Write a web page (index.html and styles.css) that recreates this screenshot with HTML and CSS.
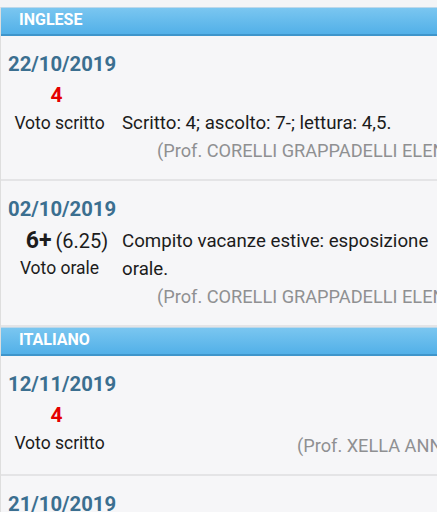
FILE: index.html
```html
<!DOCTYPE html>
<html lang="it">
<head>
<meta charset="utf-8">
<title>Voti</title>
<link rel="stylesheet" href="styles.css">
</head>
<body>
<div class="top-strip"></div>
<div class="list">
  <div class="subject">INGLESE</div>

  <div class="entry">
    <div class="date">22/10/2019</div>
    <div class="body">
      <div class="left">
        <div class="grade grade-single"><span class="mark red">4</span></div>
        <div class="type">Voto scritto</div>
      </div>
      <div class="right offset">
        <div class="desc">Scritto: 4; ascolto: 7-; lettura: 4,5.</div>
        <div class="prof prof-long">(Prof. CORELLI GRAPPADELLI ELENA)</div>
      </div>
    </div>
  </div>

  <div class="entry">
    <div class="date">02/10/2019</div>
    <div class="body">
      <div class="left">
        <div class="grade grade-wide"><span class="mark mark-big">6+</span> <span class="avg">(6.25)</span></div>
        <div class="type">Voto orale</div>
      </div>
      <div class="right">
        <div class="desc">Compito vacanze estive: esposizione orale.</div>
        <div class="prof prof-long">(Prof. CORELLI GRAPPADELLI ELENA)</div>
      </div>
    </div>
  </div>

  <div class="subject">ITALIANO</div>

  <div class="entry">
    <div class="date">12/11/2019</div>
    <div class="body">
      <div class="left">
        <div class="grade grade-single"><span class="mark red">4</span></div>
        <div class="type">Voto scritto</div>
      </div>
      <div class="right offset-empty">
        <div class="prof prof-short">(Prof. XELLA ANNA)</div>
      </div>
    </div>
  </div>

  <div class="entry">
    <div class="date">21/10/2019</div>
  </div>
</div>
</body>
</html>
```

FILE: styles.css
```css
html, body {
  margin: 0;
  padding: 0;
}

body {
  width: 437px;
  height: 512px;
  overflow: hidden;
  background: #f6f6f8;
  font-family: Roboto, "Noto Sans", Arial, sans-serif;
  color: #1c1c1c;
}

.top-strip {
  height: 7px;
  background: #f3f4f6;
}

.list {
  border-left: 1px solid #dedede;
}

.subject {
  box-sizing: border-box;
  height: 29px;
  padding: 2px 0 0 18px;
  border-top: 1px solid #bcd8ea;
  border-bottom: 2px solid #3e95cb;
  background: linear-gradient(#7ac6f0, #52b0e8);
  color: #ffffff;
  font-weight: bold;
  font-size: 16px;
  line-height: 20px;
}

.entry {
  padding: 15px 0 14px 0;
  border-bottom: 2px solid #e4e4e6;
}

.date {
  padding-left: 7px;
  font-size: 20.3px;
  line-height: 26px;
  font-weight: bold;
  color: #3b6f90;
}

.body {
  display: grid;
  grid-template-columns: 117px 1fr;
  column-gap: 4px;
  margin-top: 5px;
}

.left {
  text-align: center;
}

.grade {
  height: 27px;
  line-height: 27px;
  white-space: nowrap;
}

.grade-single {
  padding-right: 6px;
}

.grade-wide {
  padding-left: 15px;
}

.mark {
  font-size: 21px;
  font-weight: bold;
}

.mark-big {
  font-size: 23px;
}

.red {
  color: #e50000;
}

.avg {
  font-size: 20px;
}

.type {
  font-size: 17.5px;
  line-height: 28px;
}

.right {
  min-width: 0;
  line-height: 28px;
}

.desc {
  font-size: 18.7px;
}

.offset {
  padding-top: 27px;
}

.offset-empty {
  padding-top: 30px;
}

.prof {
  font-size: 18.2px;
  white-space: nowrap;
  overflow: hidden;
  color: #8f9092;
}

.prof-long {
  padding-left: 35px;
}

.prof-short {
  padding-left: 175px;
}
```
